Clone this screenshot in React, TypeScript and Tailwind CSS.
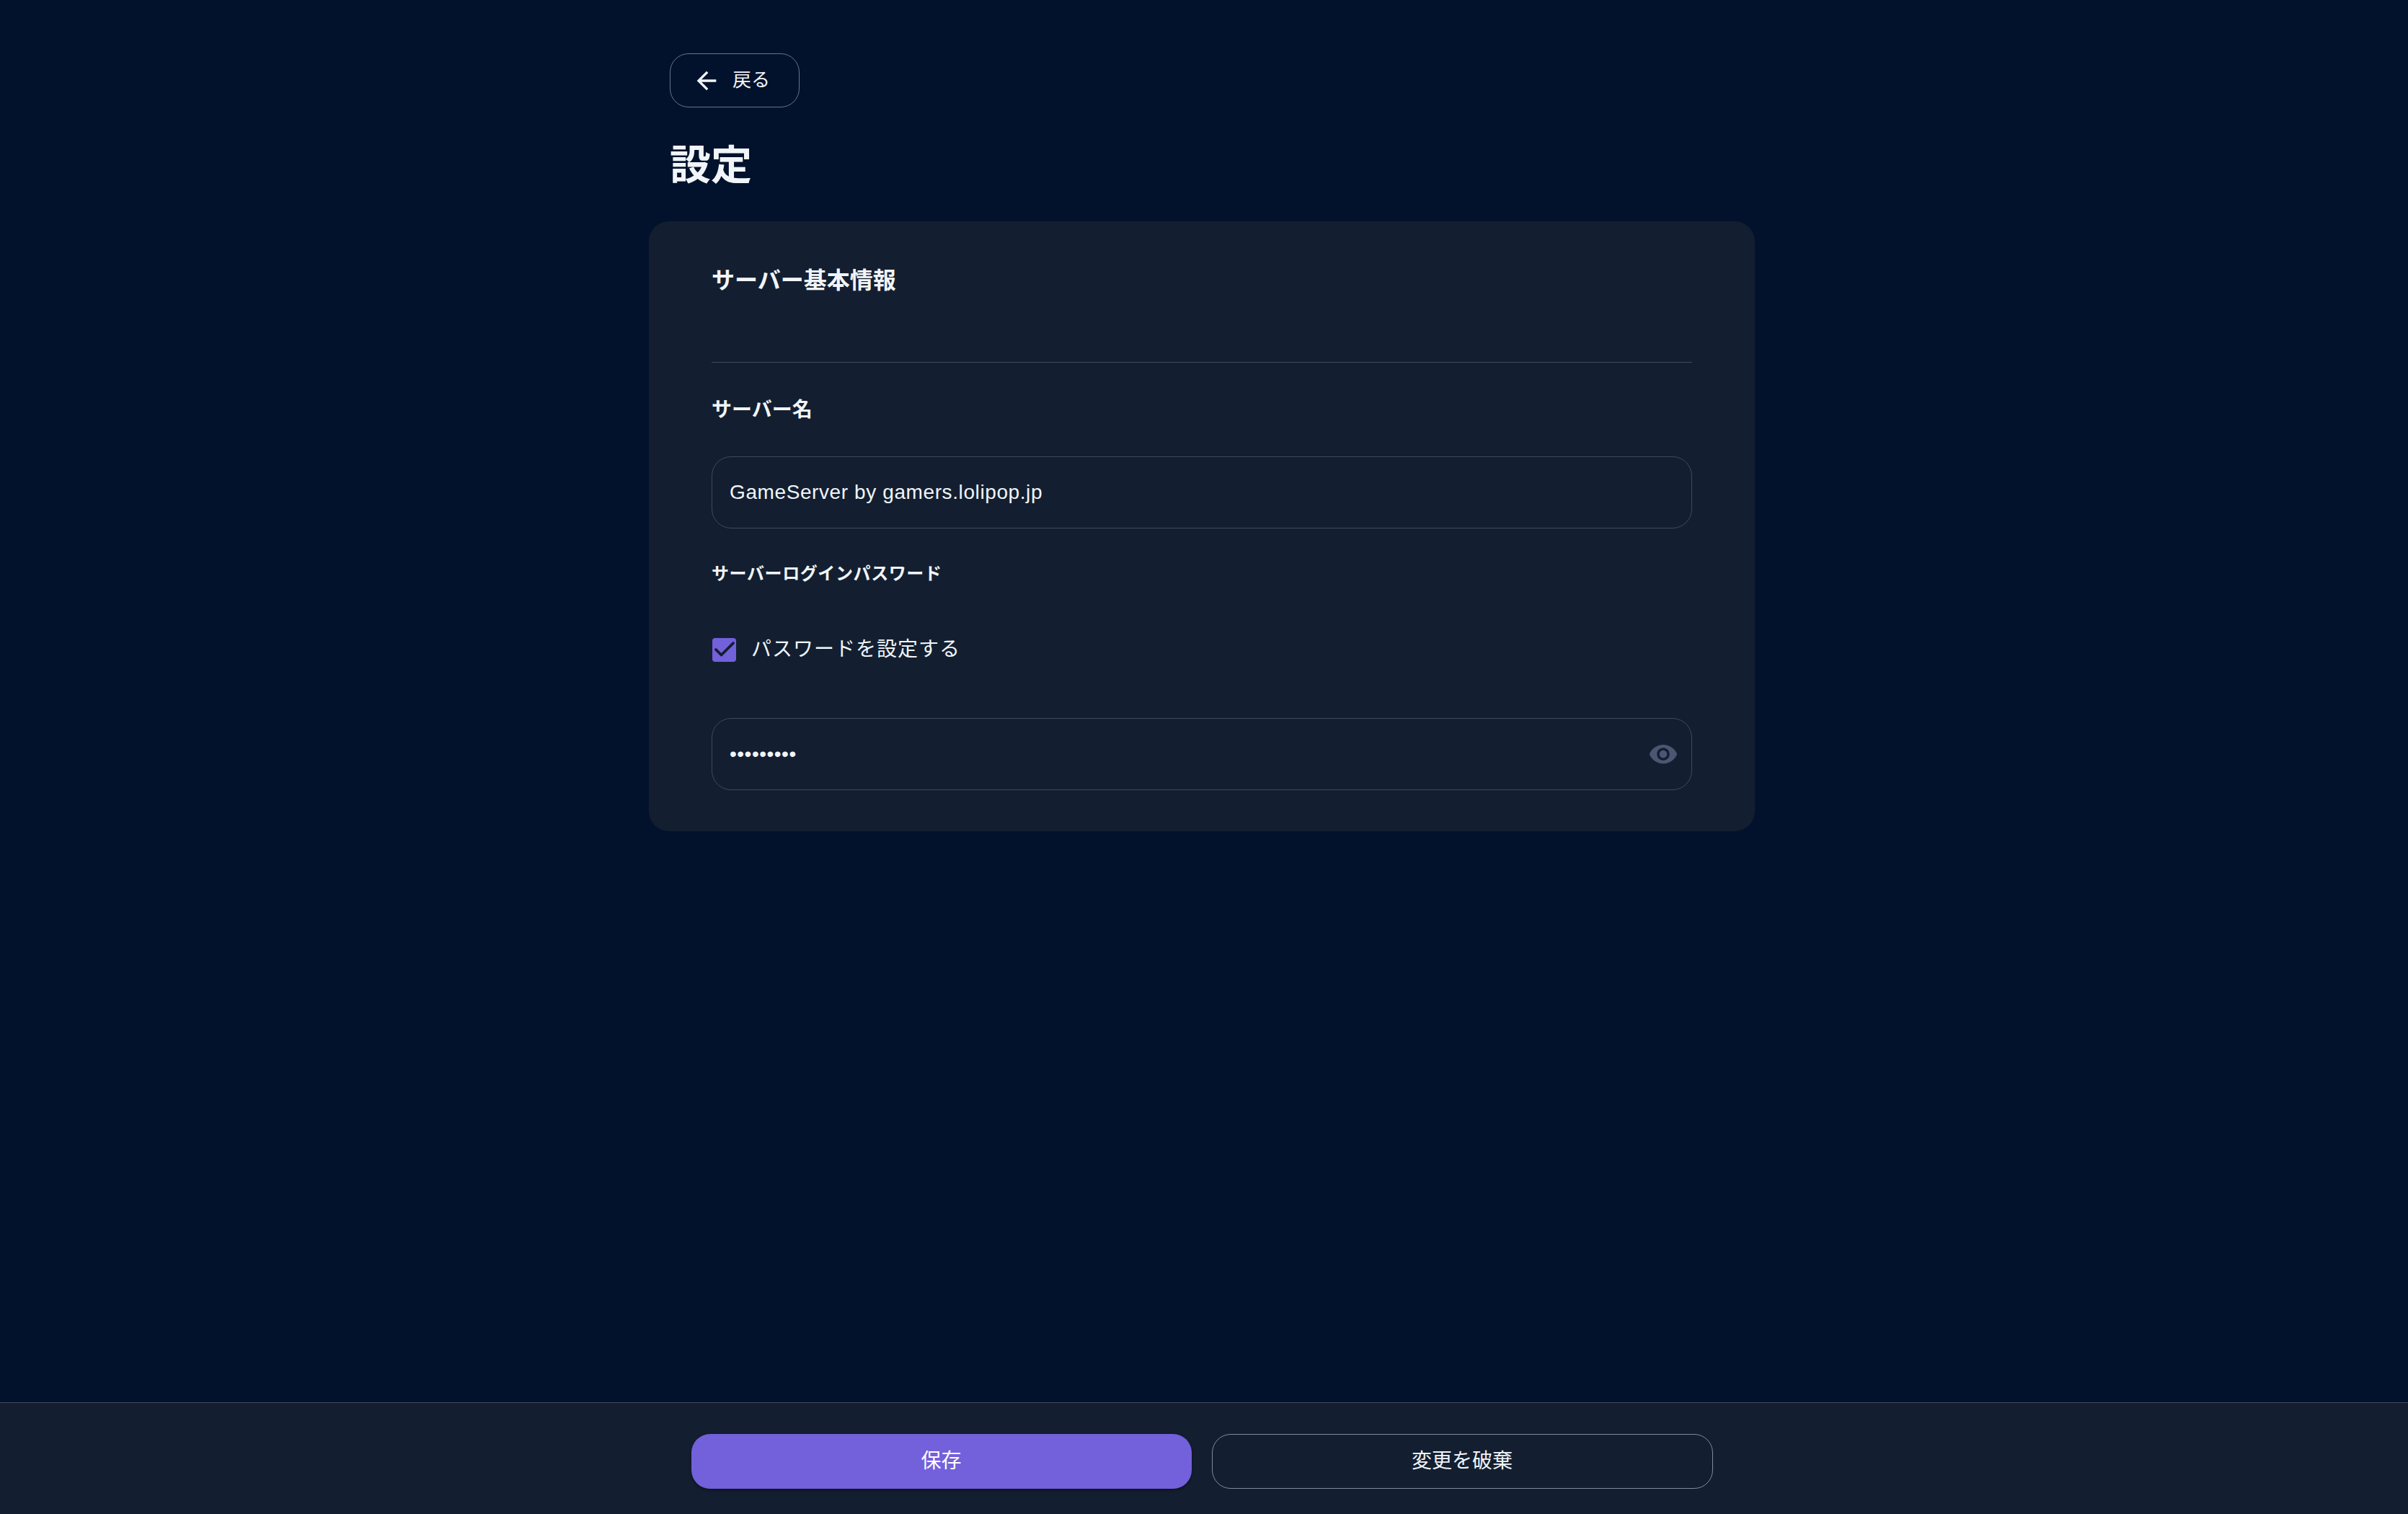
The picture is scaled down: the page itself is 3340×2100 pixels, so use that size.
import React from 'react';
import { Check } from 'lucide-react';

const font = 'font-["Liberation_Sans","Noto_Sans_CJK_JP",sans-serif]';

function EyeIcon() {
  return (
    <svg viewBox="0 0 24 24" className="w-[42px] h-[42px] fill-[#4b5673]">
      <path d="M12 4.5C7 4.5 2.73 7.61 1 12c1.73 4.39 6 7.5 11 7.5s9.27-3.11 11-7.5c-1.73-4.39-6-7.5-11-7.5zM12 17c-2.76 0-5-2.24-5-5s2.24-5 5-5 5 2.24 5 5-2.24 5-5 5zm0-8c-1.66 0-3 1.34-3 3s1.34 3 3 3 3-1.34 3-3-1.34-3-3-3z" />
    </svg>
  );
}

function BackIcon() {
  return (
    <svg viewBox="0 0 24 24" className="w-[40px] h-[40px] fill-[#f1f5f9]">
      <path d="M20 11H7.83l5.59-5.59L12 4l-8 8 8 8 1.41-1.41L7.83 13H20v-2z" />
    </svg>
  );
}

export default function App() {
  return (
    <div className={`${font} h-screen flex flex-col bg-[#03122c] text-[#f1f5f9] overflow-hidden`}>
      <main className="flex-1 w-[1534px] ml-[900px]">
        {/* Header */}
        <div className="pt-[74px] px-[29px]">
          <button className="flex items-center gap-[16px] w-[180px] h-[75px] pl-[30px] border border-[#64748b] rounded-[26px] text-[26px]">
            <BackIcon />
            戻る
          </button>
          <h1 className="mt-[46px] mb-[44px] text-[57px] leading-[68px] font-bold">設定</h1>
        </div>

        {/* Card */}
        <div className="h-[846px] px-[87px] pt-[58px] bg-[#131f30] rounded-[28px]">
          <h2 className="text-[32px] leading-[48px] font-bold">サーバー基本情報</h2>
          <div className="mt-[89px] border-t border-[#3d4a5e]" />

          <label className="block mt-[48px] text-[28px] leading-[36px] font-bold">サーバー名</label>
          <div className="mt-[46px] flex items-center h-[100px] px-[24px] border border-[#3d4a5e] rounded-[27px] text-[28px] tracking-[0.6px]">
            GameServer by gamers.lolipop.jp
          </div>

          <label className="block mt-[46px] text-[24px] leading-[34px] font-bold tracking-[0.6px]">サーバーログインパスワード</label>
          <div className="mt-[68px] flex items-center gap-[21px] h-[40px]">
            <span className="flex items-center justify-center w-[33px] h-[33px] ml-px rounded-[4px] bg-[#7360db]">
              <Check className="w-[36px] h-[36px] shrink-0 text-[#131f30]" strokeWidth={2.5} />
            </span>
            <span className="text-[28px] tracking-[1px]">パスワードを設定する</span>
          </div>

          <div className="mt-[75px] flex items-center justify-between h-[100px] pl-[24px] pr-[18px] border border-[#3d4a5e] rounded-[27px] text-[28px] tracking-[0.5px]">
            <span>•••••••••</span>
            <EyeIcon />
          </div>
        </div>
      </main>

      {/* Footer */}
      <footer className="h-[155px] shrink-0 flex justify-center gap-[28px] pt-[43px] pr-[6px] bg-[#131f30] border-t border-[#3d4a5e]">
        <button className="w-[694px] h-[76px] rounded-[26px] bg-[#7360db] text-[28px] text-white shadow-[0_2px_4px_rgba(0,0,0,0.4)]">保存</button>
        <button className="w-[695px] h-[76px] rounded-[26px] border border-[#7f8a9c] text-[28px]">変更を破棄</button>
      </footer>
    </div>
  );
}
